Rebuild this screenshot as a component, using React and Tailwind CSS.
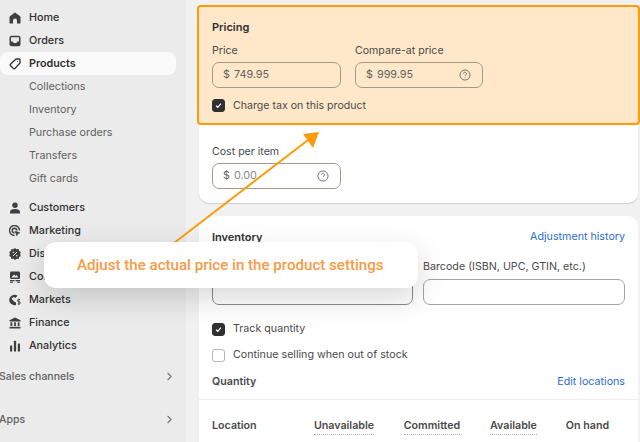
import { ChevronRight } from 'lucide-react';

const Home = () => (
  <svg viewBox="0 0 12 12" className="w-3 h-3" fill="#3f3f3f">
    <path d="M6 .5 1.2 4c-.4.3-.7.8-.7 1.300V11c0 .3.2.5.5.5h3V8.500a2 2 0 0 1 4 0v3h3c.3 0 .5-.2.5-.5V5.300c0-.5-.3-1-.7-1.300L6 .5Z" />
  </svg>
);
const Orders = () => (
  <svg viewBox="0 0 12 12" className="w-3 h-3">
    <rect x=".5" y=".8" width="11" height="10.400" rx="2" fill="#3f3f3f" />
    <path d="M2 2.200h8v4.300H8.300L7.300 8H4.700l-1-1.500H2V2.200Z" fill="#ebebeb" />
  </svg>
);
const Tag = () => (
  <svg viewBox="0 0 12 12" className="w-3 h-3" fill="none" stroke="#303030" strokeWidth="1.300" strokeLinejoin="round">
    <path d="M7 1h3.200c.5 0 .8.300.8.800V5L5.800 10.600a.9.9 0 0 1-1.300 0L1.400 7.500a.9.9 0 0 1 0-1.300L7 1Z" />
    <circle cx="8.500" cy="3.500" r=".5" fill="#303030" stroke="none" />
  </svg>
);
const Customers = () => (
  <svg viewBox="0 0 12 12" className="w-3 h-3" fill="#3f3f3f">
    <circle cx="6" cy="3.200" r="2.700" />
    <path d="M1 11.500V10c0-1.700 1.800-3 5-3s5 1.300 5 3v1.500H1Z" />
  </svg>
);
const Marketing = () => (
  <svg viewBox="0 0 12 12" className="w-3 h-3" fill="none" stroke="#3f3f3f" strokeWidth="1.400">
    <path d="M5.500 10.500a5 5 0 1 1 5-5" />
    <path d="M5.500 7.800a2.300 2.300 0 1 1 2.300-2.300" />
    <path d="M6 6l4.800 1.800-2 1-1 2L6 6Z" fill="#3f3f3f" strokeWidth=".6" />
  </svg>
);
const Discounts = () => (
  <svg viewBox="0 0 12 12" className="w-3 h-3">
    <path d="M6 0l1.600 1.200 2-.1.500 1.900 1.700 1.100L11.100 6l.7 1.900-1.700 1.100-.5 1.900-2-.1L6 12l-1.600-1.200-2 .1-.5-1.900L.2 7.900.9 6 .2 4.100 1.900 3l.5-1.900 2 .1L6 0Z" fill="#3f3f3f" />
    <path d="M4 8l4-4" stroke="#ebebeb" strokeWidth="1" />
    <circle cx="4.300" cy="4.300" r=".8" fill="#ebebeb" />
    <circle cx="7.700" cy="7.700" r=".8" fill="#ebebeb" />
  </svg>
);
const Content = () => (
  <svg viewBox="0 0 12 12" className="w-3 h-3">
    <rect x="1" y=".5" width="10" height="7.500" rx="1.200" fill="#3f3f3f" />
    <path d="M2.300 6.500 5 3.500l1.500 1.500 1-1 2 2.500h-7.200Z" fill="#ebebeb" />
    <rect x="1" y="9" width="4.500" height="1.300" fill="#3f3f3f" />
    <rect x="6.500" y="9" width="4.500" height="1.300" fill="#3f3f3f" />
    <rect x="1" y="10.800" width="3" height="1" fill="#3f3f3f" />
    <rect x="8" y="10.800" width="3" height="1" fill="#3f3f3f" />
  </svg>
);
const Markets = () => (
  <svg viewBox="0 0 12 12" className="w-3 h-3">
    <path d="M8.500 1.700A5.200 5.200 0 1 0 7 10.900V8.500L5 7.500 2.500 4.500 4.500 3l2 1 2-2.300Z" fill="#3f3f3f" />
    <path d="M11 5.500H9.500a1 1 0 0 0 0 2.200h.7a1 1 0 0 1 0 2.200H8.700M9.900 4.500v6.500" fill="none" stroke="#3f3f3f" strokeWidth=".9" />
  </svg>
);
const Finance = () => (
  <svg viewBox="0 0 12 12" className="w-3 h-3" fill="#3f3f3f">
    <path d="M6 .5 .5 3.300v1.200h11V3.300L6 .5Z" />
    <rect x="1.500" y="5.300" width="1.800" height="3.700" />
    <rect x="5.100" y="5.300" width="1.800" height="3.700" />
    <rect x="8.700" y="5.300" width="1.800" height="3.700" />
    <rect x=".5" y="9.800" width="11" height="1.700" />
  </svg>
);
const Analytics = () => (
  <svg viewBox="0 0 12 12" className="w-3 h-3" fill="#3f3f3f">
    <rect x="1" y="5.500" width="2.200" height="6" rx=".5" />
    <rect x="4.900" y=".8" width="2.200" height="10.700" rx=".5" />
    <rect x="8.800" y="3.500" width="2.200" height="8" rx=".5" />
  </svg>
);

const Help = () => (
  <svg viewBox="0 0 14 14" className="w-3 h-3 shrink-0" fill="none" stroke="#6e6e6e" strokeWidth="1.100">
    <circle cx="7" cy="7" r="5.900" />
    <path d="M5.200 5.500a1.800 1.800 0 1 1 2.700 1.600c-.6.300-.9.600-.9 1.200" />
    <circle cx="7" cy="10.200" r=".5" fill="#6e6e6e" stroke="none" />
  </svg>
);

const Check = ({ checked, border = 'border-[#8a8a8a]' }) => (
  <span className={`w-[13px] h-[13px] rounded-[3px] border flex items-center justify-center shrink-0 ${checked ? 'bg-[#303030] border-[#303030]' : `bg-white ${border}`}`}>
    {checked && (
      <svg viewBox="0 0 10 10" className="w-[9px] h-[9px]" fill="none" stroke="white" strokeWidth="1.400">
        <path d="M2.300 5.200 4.200 7l3.500-4" />
      </svg>
    )}
  </span>
);

const mainNav = [
  { label: 'Home', icon: Home },
  { label: 'Orders', icon: Orders },
];
const subNav = ['Collections', 'Inventory', 'Purchase orders', 'Transfers', 'Gift cards'];
const lowerNav = [
  { label: 'Customers', icon: Customers },
  { label: 'Marketing', icon: Marketing },
  { label: 'Discounts', icon: Discounts },
  { label: 'Content', icon: Content },
  { label: 'Markets', icon: Markets },
  { label: 'Finance', icon: Finance },
  { label: 'Analytics', icon: Analytics },
];

function NavItem({ item }) {
  const Icon = item.icon;
  return (
    <div className="h-[23px] flex items-center gap-[8px] pl-[9px] text-[#303030] font-medium">
      <Icon />
      <span>{item.label}</span>
    </div>
  );
}

function Sidebar() {
  return (
    <aside className="w-[186px] h-full shrink-0 bg-[#ebebeb] pt-[6px] pr-[10px] text-[10.750px] leading-[25px]">
      {mainNav.map(item => <NavItem key={item.label} item={item} />)}
      <div className="h-[23px] flex items-center gap-[8px] pl-[9px] bg-[#fafafa] rounded-[8px] text-[#303030] font-semibold">
        <Tag />
        <span>Products</span>
      </div>
      {subNav.map(label => (
        <div key={label} className="h-[23px] flex items-center pl-[29px] text-[#616161]">{label}</div>
      ))}
      <div className="h-[6px]" />
      {lowerNav.map(item => <NavItem key={item.label} item={item} />)}
      <div className="mt-[8px] h-[23px] flex items-center justify-between text-[10.500px] font-medium text-[#616161]">
        <span className="-ml-[1px]">Sales channels</span>
        <ChevronRight size={13} color="#777" />
      </div>
      <div className="mt-[20px] h-[23px] flex items-center justify-between text-[10.500px] font-medium text-[#616161]">
        <span className="-ml-[1px]">Apps</span>
        <ChevronRight size={13} color="#777" />
      </div>
    </aside>
  );
}

function PriceInput({ width, value, help, muted }) {
  return (
    <div className={`${width} h-[26px] rounded-[7px] border border-[#a39a8c] flex items-center pl-[10px] pr-[11px] text-[10.800px] text-[#616161]`}>
      <span className="mr-[4px]">$</span>
      <span className={`flex-1 ${muted ? 'text-[#8a8a8a]' : ''}`}>{value}</span>
      {help && <Help />}
    </div>
  );
}

function Th({ w, children, dotted }) {
  return (
    <span className={`${w} text-center`}>
      <span className={dotted ? 'border-b border-dotted border-[#aaa] pb-[2px]' : ''}>{children}</span>
    </span>
  );
}

export default function App() {
  return (
    <div className="relative w-[640px] h-[442px] overflow-hidden flex bg-[#f1f1f1] font-['Inter',sans-serif] text-[#303030]">
      <Sidebar />

      <main className="w-[454px] pl-[13px] pr-[2px] pt-[6px] flex flex-col gap-[13px]">
        <section className="h-[197px] bg-white rounded-[10px] shadow-[0_1px_1px_rgba(0,0,0,.15)] text-[10.600px]">
          <div className="-mx-[2px] -mt-[1px] h-[120px] bg-[#fee8c9] border-2 border-[#ff9a0a] rounded-[4px] px-[13px] pt-[12px]">
            <h2 className="text-[11px] font-semibold leading-[16px]">Pricing</h2>
            <div className="flex gap-[14px] mt-[8px]">
              <div>
                <label className="block leading-[16px] text-[#4a4a4a] mb-[3px]">Price</label>
                <PriceInput width="w-[129px]" value="749.95" />
              </div>
              <div>
                <label className="block leading-[16px] text-[#4a4a4a] mb-[3px]">Compare-at price</label>
                <PriceInput width="w-[128px]" value="999.95" help />
              </div>
            </div>
            <div className="flex items-center gap-[8px] mt-[10px] text-[#4a4a4a]">
              <Check checked />
              <span>Charge tax on this product</span>
            </div>
          </div>
          <div className="px-[13px] pt-[19px]">
            <label className="block leading-[16px] text-[#4a4a4a] mb-[3px]">Cost per item</label>
            <PriceInput width="w-[129px]" value="0.00" help muted />
          </div>
        </section>

        <section className="flex-1 bg-white rounded-t-[10px] text-[10.700px]">
          <div className="flex justify-between px-[13px] pt-[13px] leading-[16px]">
            <h2 className="text-[11px] font-semibold">Inventory</h2>
            <a className="text-[#2c6ecb]">Adjustment history</a>
          </div>
          <div className="flex gap-[10px] px-[13px] mt-[14px]">
            {/* label of this field sits under the callout */}
            <div className="w-[201px]">
              <div className="h-[16px] mb-[4px]" />
              <div className="h-[26px] rounded-[7px] border border-[#8a8a8a]" />
            </div>
            <div className="w-[202px]">
              <div className="leading-[16px] mb-[4px] text-[#4a4a4a]">Barcode (ISBN, UPC, GTIN, etc.)</div>
              <div className="h-[26px] rounded-[7px] border border-[#a5a5a5]" />
            </div>
          </div>
          <div className="px-[13px] mt-[16px] flex items-center gap-[8px] h-[16px] text-[#4a4a4a]">
            <Check checked />
            <span>Track quantity</span>
          </div>
          <div className="px-[13px] mt-[10px] flex items-center gap-[8px] h-[16px] text-[#4a4a4a]">
            <Check border="border-[#b5b5b5]" />
            <span>Continue selling when out of stock</span>
          </div>
          <div className="flex justify-between px-[13px] mt-[11px] h-[16px] leading-[16px]">
            <h3 className="font-semibold text-[#4a4a4a]">Quantity</h3>
            <a className="text-[#2c6ecb]">Edit locations</a>
          </div>
          <div className="border-t border-[#ececec] mt-[9px] pl-[13px] pt-[18px] flex items-center font-semibold text-[#4a4a4a] leading-[16px]">
            <span className="w-[95px]">Location</span>
            <Th w="w-[74px]" dotted>Unavailable</Th>
            <Th w="w-[102px]" dotted>Committed</Th>
            <Th w="w-[61px]" dotted>Available</Th>
            <Th w="w-[87px]">On hand</Th>
          </div>
        </section>
      </main>

      {/* arrow from callout to pricing box */}
      <svg className="absolute inset-0 pointer-events-none" width="640" height="442">
        <path d="M174 243 312 137" stroke="#ff9a0a" strokeWidth="2" />
        <path d="M319 132 303 134 313 148Z" fill="#ff9a0a" />
      </svg>

      <div className="absolute left-[44px] top-[242px] w-[374px] h-[46px] bg-white rounded-[12px] shadow-[0_10px_30px_rgba(0,0,0,.16)] flex items-center pl-[33px] font-['Roboto',sans-serif] text-[15.100px] font-medium text-[#fa9a45]">
        Adjust the actual price in the product settings
      </div>
    </div>
  );
}
